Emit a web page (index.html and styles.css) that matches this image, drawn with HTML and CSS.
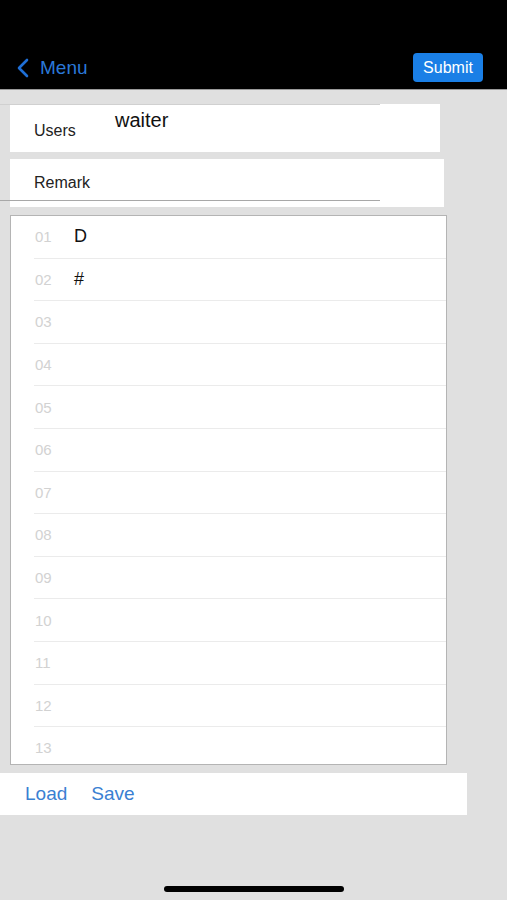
FILE: index.html
```
<!DOCTYPE html>
<html lang="en">
<head>
    <meta charset="UTF-8">
    <meta name="viewport" content="width=device-width, initial-scale=1.0">
    <title>Order</title>
    <link rel="stylesheet" href="styles.css">
</head>
<body>
    <header class="topbar">
        <a class="back" href="#">
            <svg class="chevron" width="14" height="20" viewBox="0 0 14 20">
                <path d="M11 2 L3 10 L11 18" fill="none" stroke="#1f6fd6" stroke-width="2.6" stroke-linecap="round" stroke-linejoin="round"/>
            </svg>
            <span>Menu</span>
        </a>
        <button class="submit">Submit</button>
    </header>

    <main class="content">
        <div class="card users">
            <span class="label">Users</span>
            <span class="value">waiter</span>
        </div>
        <div class="card remark">
            <span class="label">Remark</span>
        </div>

        <div class="editor">
            <div class="line"><span class="num">01</span><span class="txt">D</span></div>
            <div class="line"><span class="num">02</span><span class="txt">#</span></div>
            <div class="line"><span class="num">03</span></div>
            <div class="line"><span class="num">04</span></div>
            <div class="line"><span class="num">05</span></div>
            <div class="line"><span class="num">06</span></div>
            <div class="line"><span class="num">07</span></div>
            <div class="line"><span class="num">08</span></div>
            <div class="line"><span class="num">09</span></div>
            <div class="line"><span class="num">10</span></div>
            <div class="line"><span class="num">11</span></div>
            <div class="line"><span class="num">12</span></div>
            <div class="line"><span class="num">13</span></div>
        </div>

        <div class="actions">
            <a href="#">Load</a>
            <a href="#">Save</a>
        </div>
    </main>

    <div class="home-indicator"></div>
</body>
</html>
```

FILE: styles.css
```
body {
    font-family: 'Liberation Sans', Arial, sans-serif;
    background: #e0e0e0;
    margin: 0;
    height: 900px;
    display: flex;
    flex-direction: column;
    overflow: hidden;
}
.topbar {
    background: #000;
    height: 90px;
    border-bottom: 1px solid #9a9a9a;
    display: flex;
    align-items: flex-end;
    justify-content: space-between;
    padding: 0 24px 7px 16px;
    box-sizing: border-box;
}
.back {
    display: flex;
    align-items: center;
    gap: 10px;
    color: #2a78d8;
    text-decoration: none;
    font-size: 19px;
    padding-bottom: 3px;
}
.chevron {
    display: block;
}
.submit {
    background: #1a7fe6;
    color: #fff;
    border: none;
    border-radius: 4px;
    width: 70px;
    height: 29px;
    font-family: inherit;
    font-size: 16px;
    padding: 0;
}
.content {
    display: flex;
    flex-direction: column;
    padding-top: 14px;
}
.card {
    background: #fff;
    height: 48px;
    margin-left: 10px;
    position: relative;
    display: flex;
    align-items: center;
    padding-left: 24px;
    box-sizing: border-box;
    color: #222;
}
.card::before {
    content: "";
    position: absolute;
    left: -10px;
    width: 380px;
    height: 1px;
}
.users {
    width: 430px;
}
.users::before {
    top: 0;
    background: #d0d0d0;
}
.users .label {
    margin-top: 6px;
}
.remark {
    width: 434px;
    margin-top: 7px;
}
.remark::before {
    bottom: 6px;
    background: #a8a8a8;
}
.label {
    font-size: 16px;
    width: 81px;
}
.value {
    font-size: 20px;
    color: #111;
    margin-top: -16px;
}
.editor {
    margin: 8px 0 0 10px;
    width: 437px;
    height: 550px;
    box-sizing: border-box;
    background: #fff;
    border: 1px solid #b4b4b4;
    overflow: hidden;
}
.line {
    height: 42.6px;
    box-sizing: border-box;
    margin-left: 23px;
    border-bottom: 1px solid #ebebeb;
    display: flex;
    align-items: center;
}
.num {
    width: 39px;
    font-size: 15px;
    color: #d2d2d2;
    padding-left: 1px;
}
.txt {
    font-size: 18px;
    color: #111;
}
.actions {
    background: #fff;
    width: 467px;
    height: 42px;
    margin-top: 8px;
    display: flex;
    align-items: center;
    gap: 24px;
    padding-left: 25px;
    box-sizing: border-box;
}
.actions a {
    color: #3a80d2;
    text-decoration: none;
    font-size: 19px;
}
.home-indicator {
    margin: auto auto 8px;
    width: 180px;
    height: 6px;
    border-radius: 3px;
    background: #000;
}
```
